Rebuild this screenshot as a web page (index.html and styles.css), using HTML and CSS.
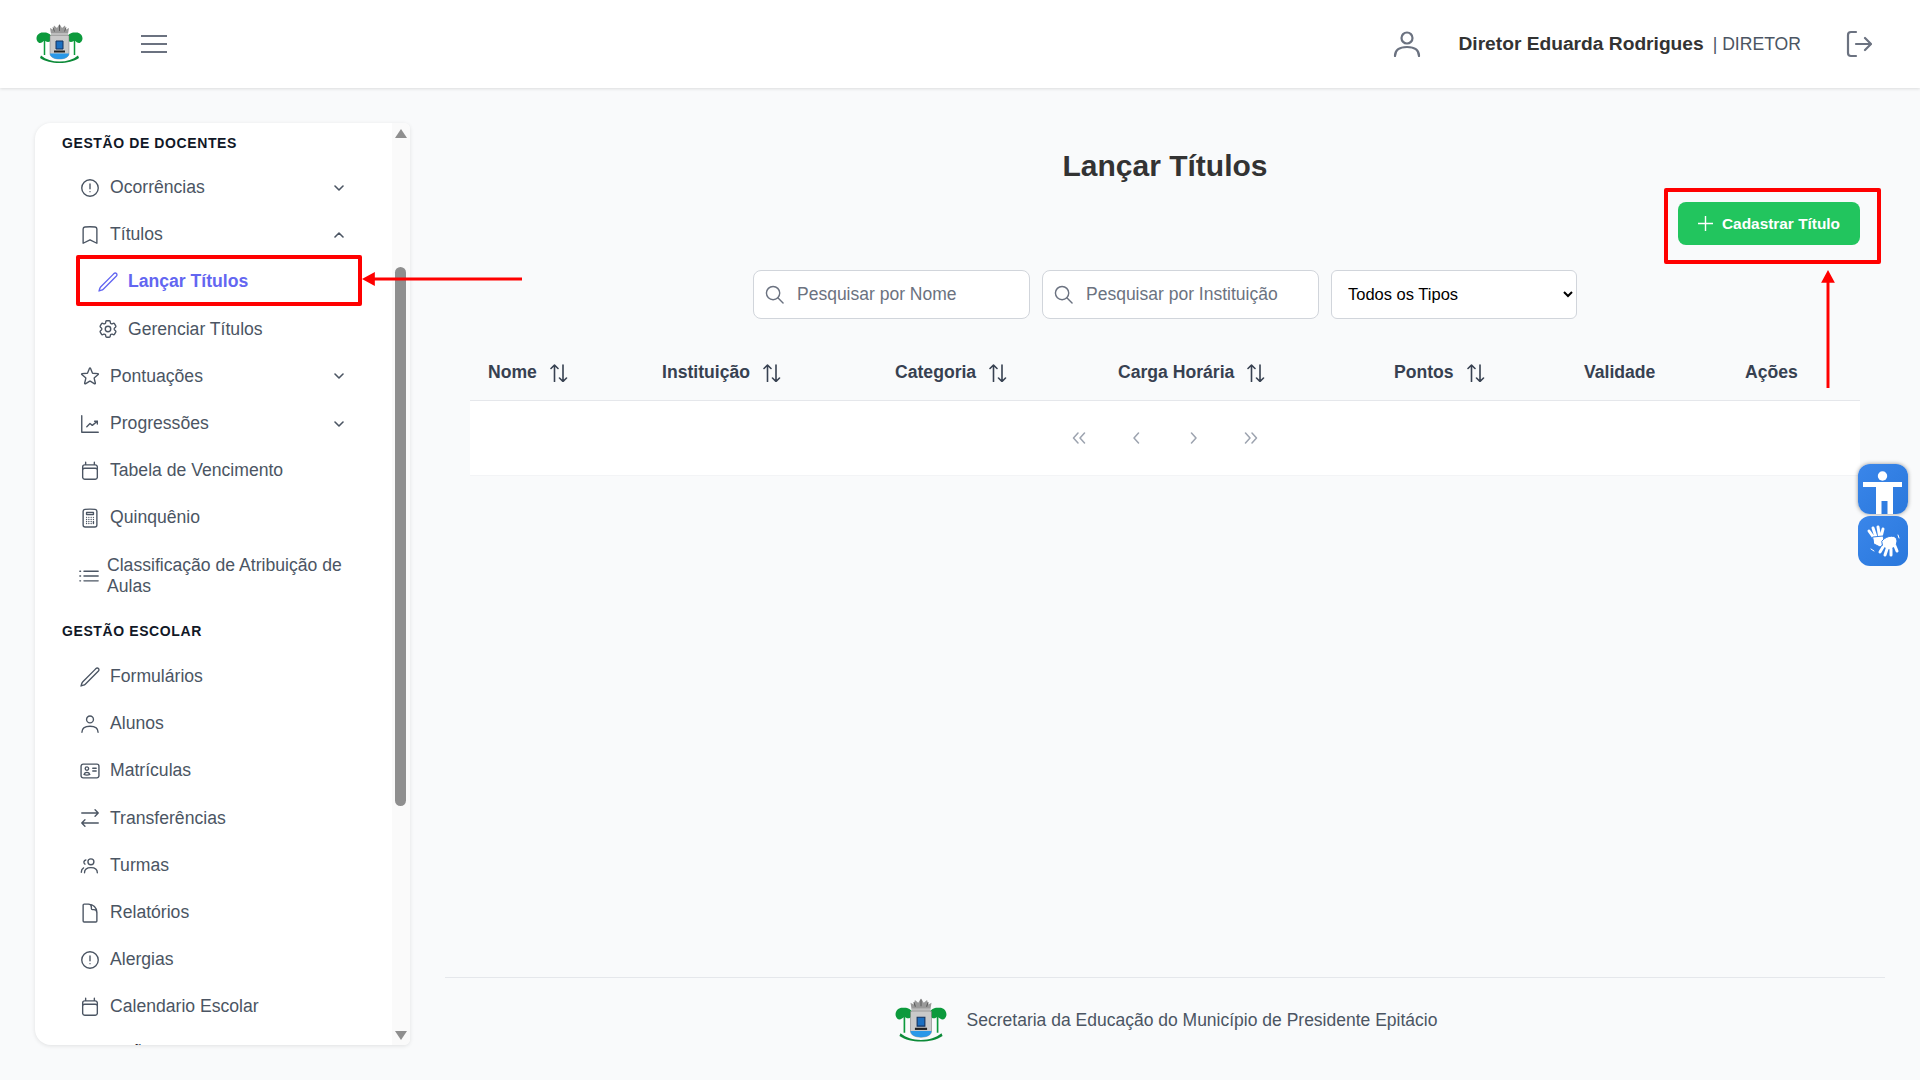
FILE: index.html
```html
<!DOCTYPE html>
<html lang="pt-BR">
<head>
<meta charset="utf-8">
<title>Lançar Títulos</title>
<link rel="stylesheet" href="styles.css">
</head>
<body>
<svg class="defs" width="0" height="0" aria-hidden="true">
  <defs>
    <symbol id="logo" viewBox="0 0 94 82">
      <path d="M30 22l-2-12 6 3 2-8 6 5 5-8 5 8 6-5 2 8 6-3-2 12z" fill="#9a9a9a"/>
      <path d="M34 9l3 8M47 4v12M60 9l-3 8" stroke="#5f5f5f" stroke-width="2" fill="none"/>
      <path d="M30 20h34v5H30z" fill="#bdbdbd"/>
      <path d="M1 31c0-8 7-13 14-12 6-1 15 2 16 9 0 6-3 10-7 10-3 0-5-2-7-3-3 2-6 5-9 5-4 0-7-5-7-9z" fill="#0c9a3c"/>
      <path d="M93 31c0-8-7-13-14-12-6-1-15 2-16 9 0 6 3 10 7 10 3 0 5-2 7-3 3 2 6 5 9 5 4 0 7-5 7-9z" fill="#0c9a3c"/>
      <path d="M17 34v30M77 34v30" stroke="#0c9a3c" stroke-width="3" fill="none"/>
      <path d="M28 25h38v36c0 7-8 11-19 11s-19-4-19-11z" fill="#c9c9c9" stroke="#777" stroke-width="1"/>
      <path d="M40 36h14v16H40z" fill="#1c6fc0" stroke="#14335f" stroke-width="2"/>
      <path d="M36 55h22v4H36z" fill="#222"/>
      <path d="M28 61h38c0 7-8 11-19 11s-19-4-19-11z" fill="#2a98e8"/>
      <path d="M10 65c10 8 22 12 37 12s27-4 37-12l2 5c-10 7-24 10-39 10S18 77 8 70z" fill="#0c8a38"/>
    </symbol>
    <symbol id="i-alert" viewBox="0 0 24 24"><path d="M12 7.5v5.25m9-.75a9 9 0 1 1-18 0 9 9 0 0 1 18 0Zm-9 4h.008v.008H12v-.008Z"/></symbol>
    <symbol id="i-bookmark" viewBox="0 0 24 24"><path d="M17.593 3.322c1.1.128 1.907 1.077 1.907 2.185V21L12 17.25 4.5 21V5.507c0-1.108.806-2.057 1.907-2.185a48.507 48.507 0 0 1 11.186 0Z"/></symbol>
    <symbol id="i-pencil" viewBox="0 0 24 24"><path d="M16.862 4.487l1.687-1.688a1.875 1.875 0 1 1 2.652 2.652L6.832 19.82a4.5 4.5 0 0 1-1.897 1.13l-2.685.8.8-2.685a4.5 4.5 0 0 1 1.13-1.897L16.863 4.487z"/></symbol>
    <symbol id="i-cog" viewBox="0 0 24 24"><path d="M9.594 3.94c.09-.542.56-.94 1.11-.94h2.593c.55 0 1.02.398 1.11.94l.213 1.281c.063.374.313.686.645.87.074.04.147.083.22.127.325.196.72.257 1.075.124l1.217-.456a1.125 1.125 0 0 1 1.37.49l1.296 2.247a1.125 1.125 0 0 1-.26 1.431l-1.003.827c-.293.241-.438.613-.43.992a7.723 7.723 0 0 1 0 .255c-.008.378.137.75.43.991l1.004.827c.424.35.534.955.26 1.43l-1.298 2.247a1.125 1.125 0 0 1-1.369.491l-1.217-.456c-.355-.133-.75-.072-1.076.124a6.47 6.47 0 0 1-.22.128c-.331.183-.581.495-.644.869l-.213 1.281c-.09.543-.56.94-1.11.94h-2.594c-.55 0-1.019-.398-1.11-.94l-.213-1.281c-.062-.374-.312-.686-.644-.87a6.52 6.52 0 0 1-.22-.127c-.325-.196-.72-.257-1.076-.124l-1.217.456a1.125 1.125 0 0 1-1.369-.49l-1.297-2.247a1.125 1.125 0 0 1 .26-1.431l1.004-.827c.292-.24.437-.613.43-.991a6.932 6.932 0 0 1 0-.255c.007-.38-.138-.751-.43-.992l-1.004-.827a1.125 1.125 0 0 1-.26-1.43l1.297-2.247a1.125 1.125 0 0 1 1.37-.491l1.216.456c.356.133.751.072 1.076-.124.072-.044.146-.086.22-.128.332-.183.582-.495.644-.869l.214-1.28Z"/><path d="M15 12a3 3 0 1 1-6 0 3 3 0 0 1 6 0Z"/></symbol>
    <symbol id="i-star" viewBox="0 0 24 24"><path d="M11.48 3.499a.562.562 0 0 1 1.04 0l2.125 5.111a.563.563 0 0 0 .475.345l5.518.442c.499.04.701.663.321.988l-4.204 3.602a.563.563 0 0 0-.182.557l1.285 5.385a.562.562 0 0 1-.84.61l-4.725-2.885a.562.562 0 0 0-.586 0L6.982 20.54a.562.562 0 0 1-.84-.61l1.285-5.386a.562.562 0 0 0-.182-.557l-4.204-3.602a.562.562 0 0 1 .321-.988l5.518-.442a.563.563 0 0 0 .475-.345L11.48 3.5Z"/></symbol>
    <symbol id="i-chart" viewBox="0 0 24 24"><path d="M3 3v18h18"/><path d="M6.5 15.5l3.500-3.500 2.500 2 5.500-4.500m0 0h-3m3 0v3" transform="translate(2 -.5)"/></symbol>
    <symbol id="i-calendar" viewBox="0 0 24 24"><path d="M7.250 2.500v2.750M16.750 2.500v2.750M4 19V7.500a2.250 2.250 0 0 1 2.250-2.250h11.500A2.250 2.250 0 0 1 20 7.500V19m-16 0A2.250 2.250 0 0 0 6.250 21h11.500A2.250 2.250 0 0 0 20 19m-16 0v-7.750A2.250 2.250 0 0 1 6.250 9h11.500A2.250 2.250 0 0 1 20 11.250V19"/></symbol>
    <symbol id="i-calc" viewBox="0 0 24 24"><path d="M15.75 15.75V18m-7.5-6.75h.008v.008H8.25v-.008Zm0 2.25h.008v.008H8.25V13.5Zm0 2.25h.008v.008H8.25v-.008Zm0 2.25h.008v.008H8.25V18Zm2.498-6.75h.007v.008h-.007v-.008Zm0 2.25h.007v.008h-.007V13.5Zm0 2.25h.007v.008h-.007v-.008Zm0 2.25h.007v.008h-.007V18Zm2.504-6.75h.008v.008h-.008v-.008Zm0 2.25h.008v.008h-.008V13.5Zm0 2.25h.008v.008h-.008v-.008Zm0 2.25h.008v.008h-.008V18Zm2.498-6.75h.008v.008h-.008v-.008Zm0 2.25h.008v.008h-.008V13.5ZM8.25 6h7.5v2.25h-7.5V6ZM12 2.25c-1.892 0-3.758.11-5.593.322C5.307 2.7 4.5 3.65 4.5 4.757V19.5a2.25 2.25 0 0 0 2.25 2.25h10.5a2.25 2.25 0 0 0 2.25-2.25V4.757c0-1.108-.806-2.057-1.907-2.185A48.507 48.507 0 0 0 12 2.25Z"/></symbol>
    <symbol id="i-list" viewBox="0 0 24 24"><path d="M6.5 6.75H22M6.5 12H22M6.5 17.25H22M2 6.75h.8M2 12h.8M2 17.25h.8"/></symbol>
    <symbol id="i-user" viewBox="0 0 24 24"><circle cx="12" cy="7" r="3.75"/><path d="M3.2 21c0-4.4 3.8-6.6 8.8-6.6s8.800 2.200 8.800 6.600"/></symbol>
    <symbol id="i-id" viewBox="0 0 24 24"><path d="M15 9h3.750M15 12h3.750M4.500 19.500h15a2.250 2.250 0 0 0 2.250-2.250V6.750A2.250 2.250 0 0 0 19.500 4.500h-15a2.250 2.250 0 0 0-2.250 2.250v10.500A2.250 2.250 0 0 0 4.500 19.500Zm6-10.125a1.875 1.875 0 1 1-3.750 0 1.875 1.875 0 0 1 3.750 0Zm1.294 6.336a6.721 6.721 0 0 1-3.170.789 6.721 6.721 0 0 1-3.168-.789 3.376 3.376 0 0 1 6.338 0Z"/></symbol>
    <symbol id="i-swap" viewBox="0 0 24 24"><path d="M6.500 21 3 17.500m0 0L6.500 14M3 17.500h18M17.500 3 21 6.500m0 0L17.500 10M21 6.500H3"/></symbol>
    <symbol id="i-users" viewBox="0 0 24 24"><circle cx="13" cy="8.500" r="3.250"/><path d="M6 20.500c0-3.700 3-5.700 7-5.700s7 2 7 5.700"/><path d="M7.500 6.500a2.500 2.500 0 0 0-1 4.600M2.500 20c0-2.500 1-4 2.500-4.800"/></symbol>
    <symbol id="i-doc" viewBox="0 0 24 24"><path d="M19.500 14.250v-2.625a3.375 3.375 0 0 0-3.375-3.375h-1.500A1.125 1.125 0 0 1 13.500 7.125v-1.500a3.375 3.375 0 0 0-3.375-3.375H8.250m2.250 0H5.625c-.621 0-1.125.504-1.125 1.125v17.250c0 .621.504 1.125 1.125 1.125h12.750c.621 0 1.125-.504 1.125-1.125V11.250a9 9 0 0 0-9-9Z"/></symbol>
    <symbol id="i-down" viewBox="0 0 10 6"><path d="M1 1l4 4 4-4"/></symbol>
    <symbol id="i-up" viewBox="0 0 10 6"><path d="M1 5l4-4 4 4"/></symbol>
    <symbol id="i-search" viewBox="0 0 20 20"><circle cx="8.500" cy="8.500" r="7"/><path d="M13.500 13.500 19 19"/></symbol>
    <symbol id="i-sort" viewBox="0 0 18 18"><path d="M4.500 17.500V1M1 4.500 4.500 1 8 4.500M13 1v16.500M9.500 14l3.500 3.500 3.500-3.500"/></symbol>
  </defs>
</svg>

<div class="app">
  <header class="topbar">
    <div class="topbar-left">
      <svg class="logo-top"><use href="#logo"/></svg>
      <svg class="burger" viewBox="0 0 26 20"><path d="M0 2h26M0 10h26M0 18h26"/></svg>
    </div>
    <div class="topbar-right">
      <svg class="top-user" viewBox="0 0 28 26"><circle cx="14" cy="7" r="5.500"/><path d="M2 25c0-6.500 5-9 12-9s12 2.500 12 9"/></svg>
      <span class="user-name">Diretor Eduarda Rodrigues</span>
      <span class="user-role">| DIRETOR</span>
      <svg class="top-logout" viewBox="0 0 26 28"><path d="M10 2H5a3 3 0 0 0-3 3v18a3 3 0 0 0 3 3h5"/><path d="M10 14h15m-6-6 6 6-6 6"/></svg>
    </div>
  </header>

  <div class="content">
    <aside class="sidebar">
      <nav class="nav">
        <h3 class="nav-title">GESTÃO DE DOCENTES</h3>
        <a class="nav-row"><svg class="ico"><use href="#i-alert"/></svg><span class="nav-text">Ocorrências</span><svg class="chev"><use href="#i-down"/></svg></a>
        <a class="nav-row"><svg class="ico"><use href="#i-bookmark"/></svg><span class="nav-text">Títulos</span><svg class="chev"><use href="#i-up"/></svg></a>
        <a class="nav-row sub active"><svg class="ico"><use href="#i-pencil"/></svg><span class="nav-text">Lançar Títulos</span></a>
        <a class="nav-row sub"><svg class="ico"><use href="#i-cog"/></svg><span class="nav-text">Gerenciar Títulos</span></a>
        <a class="nav-row"><svg class="ico"><use href="#i-star"/></svg><span class="nav-text">Pontuações</span><svg class="chev"><use href="#i-down"/></svg></a>
        <a class="nav-row"><svg class="ico"><use href="#i-chart"/></svg><span class="nav-text">Progressões</span><svg class="chev"><use href="#i-down"/></svg></a>
        <a class="nav-row"><svg class="ico"><use href="#i-calendar"/></svg><span class="nav-text">Tabela de Vencimento</span></a>
        <a class="nav-row"><svg class="ico"><use href="#i-calc"/></svg><span class="nav-text">Quinquênio</span></a>
        <a class="nav-row tight"><svg class="ico"><use href="#i-list"/></svg><span class="nav-text">Classificação de Atribuição de Aulas</span></a>
        <h3 class="nav-title next">GESTÃO ESCOLAR</h3>
        <a class="nav-row"><svg class="ico"><use href="#i-pencil"/></svg><span class="nav-text">Formulários</span></a>
        <a class="nav-row"><svg class="ico"><use href="#i-user"/></svg><span class="nav-text">Alunos</span></a>
        <a class="nav-row"><svg class="ico"><use href="#i-id"/></svg><span class="nav-text">Matrículas</span></a>
        <a class="nav-row"><svg class="ico"><use href="#i-swap"/></svg><span class="nav-text">Transferências</span></a>
        <a class="nav-row"><svg class="ico"><use href="#i-users"/></svg><span class="nav-text">Turmas</span></a>
        <a class="nav-row"><svg class="ico"><use href="#i-doc"/></svg><span class="nav-text">Relatórios</span></a>
        <a class="nav-row"><svg class="ico"><use href="#i-alert"/></svg><span class="nav-text">Alergias</span></a>
        <a class="nav-row"><svg class="ico"><use href="#i-calendar"/></svg><span class="nav-text">Calendario Escolar</span></a>
        <h3 class="nav-title next">ATRIBUIÇÃO</h3>
      </nav>
      <div class="scrolltrack">
        <span class="scroll-up"></span>
        <span class="scroll-thumb"></span>
        <span class="scroll-down"></span>
      </div>
    </aside>

    <main class="main">
      <h1 class="page-title">Lançar Títulos</h1>
      <div class="actions">
        <button class="btn-add"><svg class="plus" viewBox="0 0 16 16"><path d="M8 0v16M0 8h16"/></svg>Cadastrar Título</button>
      </div>
      <div class="filters">
        <label class="search"><svg class="search-ico"><use href="#i-search"/></svg><input placeholder="Pesquisar por Nome"></label>
        <label class="search"><svg class="search-ico"><use href="#i-search"/></svg><input placeholder="Pesquisar por Instituição"></label>
        <select class="type-select"><option>Todos os Tipos</option></select>
      </div>
      <section class="table">
        <div class="thead">
          <div class="th">Nome<svg class="sort"><use href="#i-sort"/></svg></div>
          <div class="th">Instituição<svg class="sort"><use href="#i-sort"/></svg></div>
          <div class="th">Categoria<svg class="sort"><use href="#i-sort"/></svg></div>
          <div class="th">Carga Horária<svg class="sort"><use href="#i-sort"/></svg></div>
          <div class="th">Pontos<svg class="sort"><use href="#i-sort"/></svg></div>
          <div class="th">Validade</div>
          <div class="th">Ações</div>
        </div>
        <div class="tbody">
          <svg class="pg" viewBox="0 0 14 12"><path d="M6 1 1.500 6 6 11M12.500 1 8 6l4.500 5"/></svg>
          <svg class="pg" viewBox="0 0 14 12"><path d="M9.500 1 5 6l4.500 5"/></svg>
          <svg class="pg" viewBox="0 0 14 12"><path d="M4.500 1 9 6l-4.500 5"/></svg>
          <svg class="pg" viewBox="0 0 14 12"><path d="M1.500 1 6 6l-4.500 5M8 1l4.500 5L8 11"/></svg>
        </div>
      </section>
      <footer class="footer">
        <svg class="logo-foot"><use href="#logo"/></svg>
        <span class="foot-text">Secretaria da Educação do Município de Presidente Epitácio</span>
      </footer>
    </main>
  </div>
</div>

<div class="a11y">
  <div class="a11y-btn first">
    <svg viewBox="0 0 50 50"><circle cx="24.500" cy="12" r="4.700" fill="#fff"/><path d="M5 18h39v5H35v27h-5.500V37h-6v13H18V23H5z" fill="#fff"/></svg>
  </div>
  <div class="a11y-btn">
    <svg viewBox="0 0 50 50" class="hands">
      <path d="M11 15l5 7M15 12l3 9M20 11l1.500 9M25 13l-2 8"/>
      <path class="palm" d="M15 21l10-1 2 7-5 4-6-3z"/>
      <path class="palm" d="M24 25c3-4 9-6 13-4 3 2 2 7 0 10l-6 3-6-3z"/>
      <path d="M25 31l-3 5M29 33l-2 6M33 33l0 6M37 30l2 5"/>
      <path class="thin" d="M40 19l1 3M13 33l3 2"/>
    </svg>
  </div>
</div>

<div class="mark mark-menu"></div>
<div class="mark mark-btn"></div>
<svg class="arrow arrow-left" viewBox="0 0 162 16"><path d="M0 8 13 1v5.500h149v3H13V15z"/></svg>
<svg class="arrow arrow-up" viewBox="0 0 16 120"><path d="M8 0l7 13H9.500v107h-3V13H1z"/></svg>
</body>
</html>
```

FILE: styles.css
```css
* { box-sizing: border-box; }
html, body { margin: 0; height: 100%; }
body {
  background: #f9fafb;
  font-family: "Liberation Sans", Arial, sans-serif;
  font-size: 17.6px;
  color: #374151;
  overflow: hidden;
}
.defs { position: absolute; }
.app { display: flex; flex-direction: column; height: 100vh; }

/* top bar */
.topbar {
  flex: none;
  height: 88px;
  background: #fff;
  box-shadow: 0 1px 3px rgba(0, 0, 0, .12);
  display: flex;
  align-items: center;
  justify-content: space-between;
  padding: 0 48px 0 36px;
  position: relative;
  z-index: 1;
}
.topbar-left { display: flex; align-items: center; gap: 58px; }
.logo-top { width: 47px; height: 41px; margin-top: -2px; }
.burger { width: 26px; height: 20px; fill: none; stroke: #6b7280; stroke-width: 2.200; stroke-linecap: round; }
.topbar-right { display: flex; align-items: center; }
.top-user { width: 28px; height: 26px; fill: none; stroke: #6b7280; stroke-width: 2.200; stroke-linecap: round; margin-right: 37px; }
.user-name { font-size: 19.200px; font-weight: 700; color: #333; }
.user-role { margin-left: 9px; color: #4b5563; }
.top-logout { width: 26px; height: 28px; margin-left: 45px; fill: none; stroke: #6b7280; stroke-width: 2.200; stroke-linecap: round; stroke-linejoin: round; }

/* layout */
.content { flex: 1; min-height: 0; display: flex; padding-top: 35px; }

/* sidebar */
.sidebar {
  flex: none;
  position: relative;
  width: 375px;
  height: 922px;
  margin-left: 35px;
  background: #fff;
  border-radius: 16px 6px 6px 16px;
  box-shadow: 0 1px 4px rgba(0, 0, 0, .1);
  overflow: hidden;
}
.nav { padding-right: 66px; }
.nav-title {
  margin: 0;
  padding: 10px 0 11px 27px;
  font-size: 14px;
  line-height: 20px;
  font-weight: 700;
  letter-spacing: .6px;
  color: #111827;
}
.nav-title.next { padding: 11px 0 12px 27px; }
.nav-row {
  display: flex;
  align-items: center;
  padding: 13px 0 13px 44px;
  line-height: 21.200px;
  color: #4b5563;
}
.nav-row.sub { padding-left: 62px; }
.nav-row.tight { padding-left: 43px; }
.nav-row.tight .ico { margin-right: 7px; }
.nav-row.active { color: #6366f1; font-weight: 700; }
.ico {
  flex: none;
  width: 22px;
  height: 22px;
  margin: -1px 9px -1px 0;
  fill: none;
  stroke: currentColor;
  stroke-width: 1.500;
  stroke-linecap: round;
  stroke-linejoin: round;
}
.nav-text { flex: 1; }
.chev { flex: none; width: 10px; height: 6px; fill: none; stroke: #4b5563; stroke-width: 1.600; stroke-linecap: round; stroke-linejoin: round; }
.scrolltrack {
  position: absolute;
  top: 0;
  right: 0;
  bottom: 0;
  width: 18px;
  background: #fafafa;
}
.scroll-up, .scroll-down, .scroll-thumb { position: absolute; display: block; }
.scroll-up { top: 6px; left: 3px; border: 6.500px solid transparent; border-top: 0; border-bottom: 9px solid #8f8f8f; }
.scroll-down { bottom: 5px; left: 3px; border: 6.500px solid transparent; border-bottom: 0; border-top: 9px solid #8f8f8f; }
.scroll-thumb { top: 144px; left: 3px; width: 11px; height: 539px; background: #8f8f8f; border-radius: 6px; }

/* main */
.main { flex: 1; min-width: 0; display: flex; flex-direction: column; margin: -35px 35px 0; padding-top: 60px; }
.page-title { margin: 0; text-align: center; font-size: 30px; line-height: 36px; font-weight: 700; color: #333; }
.actions { display: flex; justify-content: flex-end; padding: 18px 25px 0; }
.btn-add {
  display: flex;
  align-items: center;
  width: 182px;
  height: 43px;
  padding: 0 0 0 20px;
  border: 0;
  border-radius: 8px;
  background: #22c55e;
  color: #fff;
  font: 700 15.400px "Liberation Sans", Arial, sans-serif;
}
.plus { width: 15px; height: 15px; margin-right: 9px; fill: none; stroke: #fff; stroke-width: 1.500; }
.filters { display: flex; justify-content: center; gap: 12px; margin-top: 25px; }
.search {
  display: flex;
  align-items: center;
  width: 277px;
  height: 49px;
  padding-left: 11px;
  background: #fff;
  border: 1px solid #d1d5db;
  border-radius: 8px;
}
.search-ico { flex: none; width: 19px; height: 19px; margin-right: 13px; fill: none; stroke: #6b7280; stroke-width: 1.500; stroke-linecap: round; }
.search input {
  flex: 1;
  min-width: 0;
  border: 0;
  outline: 0;
  background: transparent;
  font: 17.500px "Liberation Sans", Arial, sans-serif;
  color: #374151;
  padding: 0;
}
.search input::placeholder { color: #6b7280; opacity: 1; }
.type-select {
  width: 246px;
  height: 49px;
  padding: 0 0 2px 12px;
  background: #fff;
  border: 1px solid #d1d5db;
  border-radius: 6px;
  font: 16.500px "Liberation Sans", Arial, sans-serif;
  color: #000;
}
.table { margin: 33px 25px 0; }
.thead {
  display: grid;
  grid-template-columns: 174px 233px 223px 276px 190px 161px 133px;
  height: 49px;
  padding-bottom: 8px;
  border-bottom: 1px solid #e5e7eb;
}
.th { display: flex; align-items: center; padding-left: 18px; font-weight: 700; color: #374151; }
.sort { width: 18px; height: 18px; margin-left: 13px; fill: none; stroke: #374151; stroke-width: 1.600; stroke-linecap: round; stroke-linejoin: round; margin-top: 2px; }
.tbody {
  display: flex;
  justify-content: center;
  align-items: center;
  gap: 43.500px;
  height: 75px;
  background: #fff;
  border-bottom: 1px solid #f3f4f6;
}
.pg { width: 14px; height: 12px; fill: none; stroke: #9ca3af; stroke-width: 1.500; stroke-linecap: round; stroke-linejoin: round; }
.footer {
  margin-top: auto;
  height: 103px;
  border-top: 1px solid #e5e7eb;
  display: flex;
  justify-content: center;
  gap: 20px;
  padding: 19px 0 0 2px;
}
.logo-foot { width: 52px; height: 46px; }
.foot-text { font-size: 17.500px; line-height: 46px; color: #4b5563; }

/* floating accessibility buttons */
.a11y { position: absolute; top: 464px; left: 1858px; display: flex; flex-direction: column; gap: 2px; }
.a11y-btn { width: 50px; height: 50px; border-radius: 12px; background: linear-gradient(135deg, #3a86ea, #2a78dc); }
.a11y-btn.first { box-shadow: 0 0 4px rgba(0, 0, 0, .4); }
.a11y-btn svg { display: block; width: 50px; height: 50px; }
.hands { fill: none; stroke: #fff; stroke-width: 3; stroke-linecap: round; stroke-linejoin: round; }
.hands .palm { fill: #fff; stroke: #2f7de4; stroke-width: 1; }
.hands .thin { stroke-width: 1; }

/* red annotations over the screenshot */
.mark { position: absolute; border: 4px solid #ff0000; border-radius: 2px; }
.mark-menu { left: 76px; top: 255px; width: 286px; height: 51px; }
.mark-btn { left: 1664px; top: 188px; width: 217px; height: 76px; }
.arrow { position: absolute; fill: #ff0000; }
.arrow-left { left: 362px; top: 271px; width: 160px; height: 16px; }
.arrow-up { left: 1820px; top: 270px; width: 16px; height: 118px; }
```
